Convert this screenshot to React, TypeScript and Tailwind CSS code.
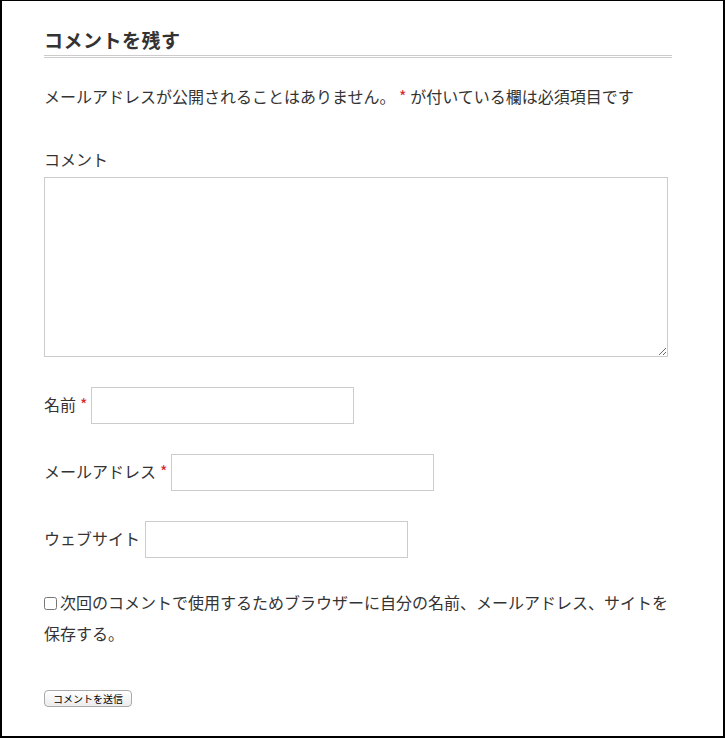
import React from "react"

const font = { fontFamily: '"Noto Sans CJK JP", "Noto Sans", sans-serif' }

const Required = () => <span className="text-[#d9232d]">*</span>

const TextField = ({ label, required }: { label: string; required?: boolean }) => (
  <div className="mt-[30px] flex h-[37px] items-center">
    <label className="pb-[4px] leading-6">{label}</label>
    {required && <span className="ml-[4px] pb-[4px] leading-6"><Required /></span>}
    <input type="text" className="ml-[3px] h-[37px] w-[263px] border border-[#ccc] bg-white px-2 outline-none" />
  </div>
)

export default function App() {
  return (
    <div
      className="h-[738px] w-[725px] border-t border-l-2 border-r-2 border-b-2 border-black bg-white pl-[42px] text-[16px] text-[#333]"
      style={font}
    >
      <div className="w-[628px]">
        <h3 className="border-b-[3px] border-double border-[#ccc] pt-[27px] pb-[3px] text-[19px] font-bold leading-6 tracking-[0.5px]">
          コメントを残す
        </h3>

        <p className="mt-[26px] leading-6">
          メールアドレスが公開されることはありません。 <Required /> が付いている欄は必須項目です
        </p>

        <div className="mt-[39px] leading-6">コメント</div>
        <textarea className="mt-[6px] block h-[180px] w-[624px] border border-[#ccc] bg-white outline-none" />

        <TextField label="名前" required />
        <TextField label="メールアドレス" required />
        <div className="mt-[30px] flex h-[37px] items-center">
          <label className="pb-[4px] leading-6">ウェブサイト</label>
          <input type="text" className="ml-[5px] h-[37px] w-[263px] border border-[#ccc] bg-white px-2 outline-none" />
        </div>

        <p className="mt-[29px] leading-[31px]">
          <input type="checkbox" className="m-0 mr-[3px] h-[13px] w-[13px] align-[-1px]" />
          次回のコメントで使用するためブラウザーに自分の名前、メールアドレス、サイトを保存する。
        </p>

        <button className="mt-[41px] flex h-[17px] items-center rounded-[4px] border border-[#aaa] bg-gradient-to-b from-white to-[#ececec] px-[8px] text-[10px] leading-none text-black">
          コメントを送信
        </button>
      </div>
    </div>
  )
}
